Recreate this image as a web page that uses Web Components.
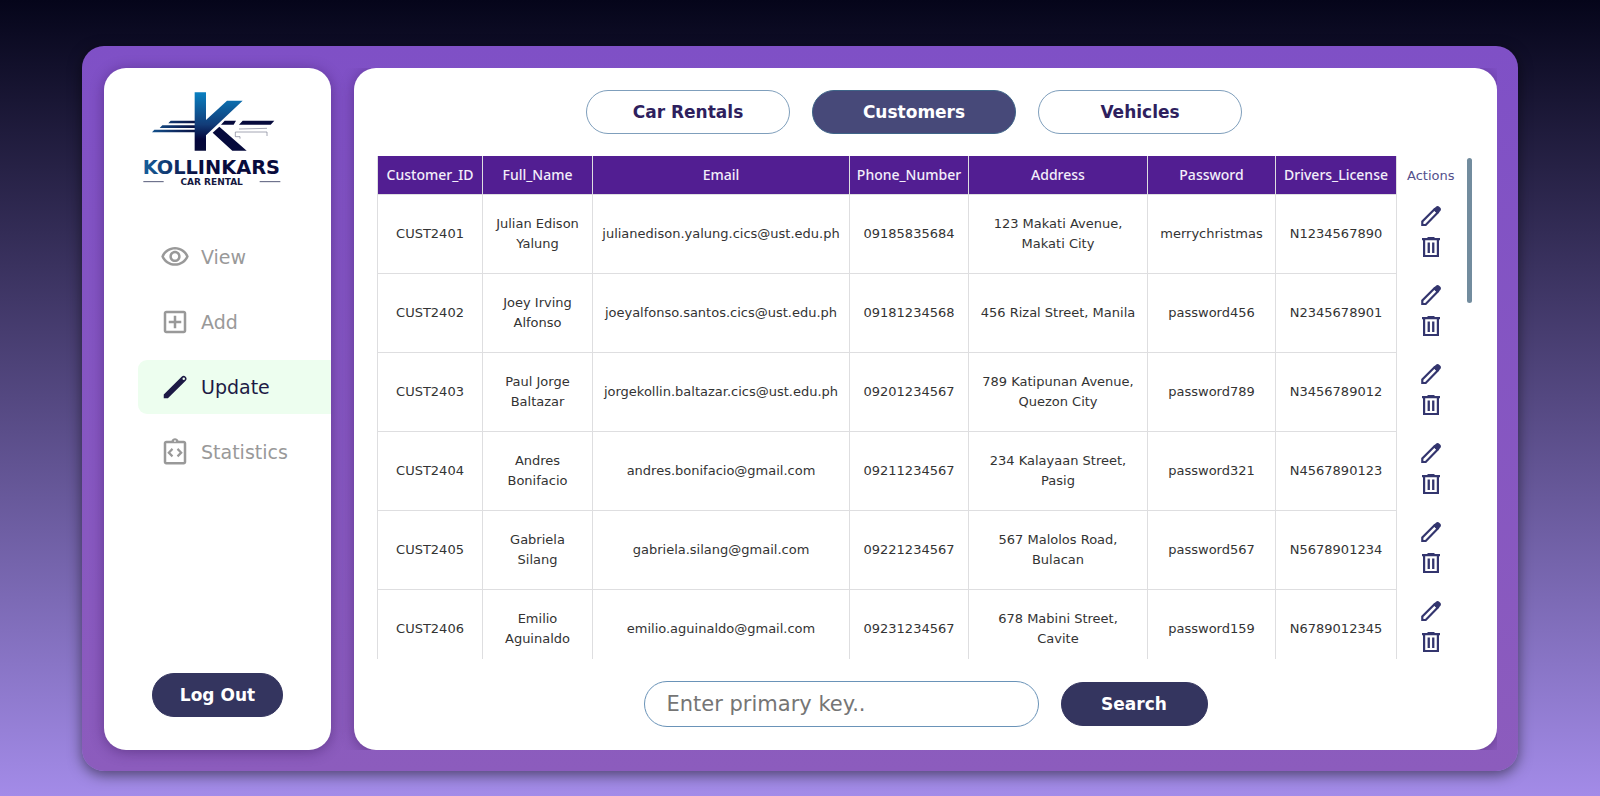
<!DOCTYPE html>
<html lang="en">
<head>
<meta charset="utf-8">
<title>Kollinkars Car Rental</title>
<style>
  html { height: 100%; }
  body { margin: 0; min-height: 100%; font-family: "DejaVu Sans", Verdana, sans-serif; background: #05051a; }
</style>
</head>
<body>
<rental-app></rental-app>

<script>
const ICONS = {
  view: '<path d="M12 6c3.79 0 7.17 2.13 8.82 5.5C19.17 14.87 15.79 17 12 17s-7.17-2.13-8.82-5.5C4.83 8.13 8.21 6 12 6m0-2C7 4 2.73 7.11 1 11.5 2.73 15.89 7 19 12 19s9.27-3.11 11-7.5C21.27 7.11 17 4 12 4zm0 5c1.38 0 2.5 1.12 2.5 2.5S13.38 14 12 14s-2.5-1.12-2.5-2.5S10.62 9 12 9m0-2c-2.48 0-4.5 2.02-4.5 4.5S9.52 16 12 16s4.5-2.02 4.5-4.5S14.48 7 12 7z"/>',
  add: '<path d="M19 3H5c-1.100 0-2 .9-2 2v14c0 1.100.9 2 2 2h14c1.100 0 2-.9 2-2V5c0-1.100-.9-2-2-2zm0 16H5V5h14v14zm-8-2h2v-4h4v-2h-4V7h-2v4H7v2h4z"/>',
  update: '<path fill-rule="evenodd" d="M3 18 17.300 3.700a2.300 2.300 0 0 1 3.200 0 2.300 2.300 0 0 1 0 3.200L6.300 21H3zM19 4.300a1 1 0 1 0 0 2 1 1 0 0 0 0-2z"/>',
  stats: '<path d="M19 3h-4.180C14.400 1.840 13.300 1 12 1s-2.400.84-2.820 2H5c-1.100 0-2 .9-2 2v15c0 1.100.9 2 2 2h14c1.100 0 2-.9 2-2V5c0-1.100-.9-2-2-2zm-7-.5c.41 0 .75.34.75.75S12.410 4 12 4s-.75-.34-.75-.75.34-.75.75-.75zM19 20H5V5h14v15z"/><path d="M10 9.500 7 12.500l3 3M14 9.500l3 3-3 3" fill="none" stroke="currentColor" stroke-width="1.700"/>',
  edit: '<path d="M3.300 21v-3.600L15.500 5.200l3.300 3.300L6.700 21z" fill="none" stroke="currentColor" stroke-width="2.200"/><path d="M14 5.500 17 2.700c.9-.9 2.300-.9 3.200 0l1.100 1.100c.9.9.9 2.300 0 3.200L18.500 10z"/>',
  remove: '<path d="M8.500 2h7v1H21v2.200h-1V22H4V5.200H3V3h5.500zM6.200 5.200v14.700h11.600V5.200zM8.600 7.500h2.300v10.500H8.600zm4.500 0h2.300v10.500h-2.300z" fill-rule="evenodd"/>'
};

const CUSTOMERS = [
  ['CUST2401', 'Julian Edison Yalung', 'julianedison.yalung.cics@ust.edu.ph', '09185835684', '123 Makati Avenue, Makati City', 'merrychristmas', 'N1234567890'],
  ['CUST2402', 'Joey Irving Alfonso', 'joeyalfonso.santos.cics@ust.edu.ph', '09181234568', '456 Rizal Street, Manila', 'password456', 'N2345678901'],
  ['CUST2403', 'Paul Jorge Baltazar', 'jorgekollin.baltazar.cics@ust.edu.ph', '09201234567', '789 Katipunan Avenue, Quezon City', 'password789', 'N3456789012'],
  ['CUST2404', 'Andres Bonifacio', 'andres.bonifacio@gmail.com', '09211234567', '234 Kalayaan Street, Pasig', 'password321', 'N4567890123'],
  ['CUST2405', 'Gabriela Silang', 'gabriela.silang@gmail.com', '09221234567', '567 Malolos Road, Bulacan', 'password567', 'N5678901234'],
  ['CUST2406', 'Emilio Aguinaldo', 'emilio.aguinaldo@gmail.com', '09231234567', '678 Mabini Street, Cavite', 'password159', 'N6789012345']
];

function define(name, html) {
  const tpl = document.createElement('template');
  tpl.innerHTML = html;
  customElements.define(name, class extends HTMLElement {
    constructor() {
      super();
      this.attachShadow({ mode: 'open' }).append(tpl.content.cloneNode(true));
    }
  });
}

/* Single glyph from the icon set; sized by --icon-size */
customElements.define('app-icon', class extends HTMLElement {
  connectedCallback() {
    const root = this.shadowRoot || this.attachShadow({ mode: 'open' });
    root.innerHTML = `<style>
      :host { display: block; width: var(--icon-size, 24px); height: var(--icon-size, 24px); }
      svg { display: block; width: 100%; height: 100%; }
    </style><svg viewBox="0 0 24 24" fill="currentColor" aria-hidden="true">${ICONS[this.getAttribute('name')]}</svg>`;
  }
});

define('brand-logo', `
<style>
  :host { display: block; width: 138px; height: 95px; }
  svg { display: block; overflow: visible; }
</style>
<svg width="138" height="95" viewBox="250 183 414 285" role="img" aria-label="Kollinkars Car Rental">
  <defs>
    <linearGradient id="v" gradientUnits="userSpaceOnUse" x1="0" y1="188" x2="0" y2="362">
      <stop offset="0" stop-color="#0a7fc0"/><stop offset=".55" stop-color="#123c78"/><stop offset=".8" stop-color="#04063c"/><stop offset="1" stop-color="#060a38"/>
    </linearGradient>
    <linearGradient id="h" gradientUnits="userSpaceOnUse" x1="250" y1="0" x2="420" y2="0">
      <stop offset="0" stop-color="#17609c"/><stop offset=".6" stop-color="#0e2a60"/><stop offset="1" stop-color="#080c3c"/>
    </linearGradient>
  </defs>
  <g fill="url(#h)">
    <path d="M333 272H406V280H326zM308 286H406V294H300zM284 299H406V307H277z"/>
  </g>
  <path fill="url(#v)" d="M405 187H439V270L502 212H549L439 316V362H405z"/>
  <path fill="#060a3c" d="M479 290 561 362H518L459 308zM495 272H529L522 284H484zM549 272H644L633 284H538z"/>
  <path d="M538 297 622 295M527 320V306H622V318M527 320H541V326" fill="none" stroke="#777a90" stroke-width="2"/>
  <text x="249" y="433" font-family="DejaVu Sans" font-weight="700" font-size="58" fill="url(#h)">KOLLINKARS</text>
  <path d="M251 455H312M600 455H662" stroke="#555a78" stroke-width="3"/>
  <text x="456" y="465" text-anchor="middle" font-family="DejaVu Sans" font-weight="700" font-size="27" fill="#15193f">CAR RENTAL</text>
</svg>`);

define('nav-link', `
<style>
  :host { display: block; color: #999; --icon-size: 30px; }
  :host([active]) { color: #1d1a45; }
  a {
    display: flex; align-items: center; gap: 11px; height: 54px; padding-left: 22px;
    border-radius: 9px 0 0 9px; color: inherit; text-decoration: none; font-size: 19px;
  }
  :host([active]) a { background: #edfeef; }
</style>
<a href="#"><slot name="icon"></slot><slot></slot></a>`);

define('pill-button', `
<style>
  :host { display: block; }
  button {
    box-sizing: border-box; width: 100%; height: 44px; padding: 0; border-radius: 22px;
    border: 1px solid #34355f; background: #34355f; color: #fff;
    font: 700 17px "DejaVu Sans", Verdana, sans-serif; cursor: pointer;
  }
  :host([outline]) button { background: #fff; color: #2e1f5e; border-color: #7f9fbc; }
  :host([selected]) button { background: #474979; border-color: #3f6488; }
</style>
<button type="button"><slot></slot></button>`);

define('side-bar', `
<style>
  :host {
    display: flex; flex-direction: column; box-sizing: border-box; width: 227px;
    padding: 23px 0 33px; background: #fff; border-radius: 22px;
    box-shadow: 0 2px 14px rgba(40, 10, 70, .4);
  }
  header { padding-left: 39px; }
  nav { display: flex; flex-direction: column; gap: 11px; margin: 44px 0 auto; padding-left: 34px; }
  pill-button { width: 131px; margin: 0 auto; }
</style>
<header><brand-logo></brand-logo></header>
<nav>
  <nav-link><app-icon slot="icon" name="view"></app-icon>View</nav-link>
  <nav-link><app-icon slot="icon" name="add"></app-icon>Add</nav-link>
  <nav-link active><app-icon slot="icon" name="update"></app-icon>Update</nav-link>
  <nav-link><app-icon slot="icon" name="stats"></app-icon>Statistics</nav-link>
</nav>
<pill-button>Log Out</pill-button>`);

define('tab-bar', `
<style>
  :host { display: flex; justify-content: center; gap: 22px; padding-right: 23px; }
  pill-button { width: 204px; }
</style>
<pill-button outline>Car Rentals</pill-button>
<pill-button selected>Customers</pill-button>
<pill-button outline>Vehicles</pill-button>`);

customElements.define('customer-table', class extends HTMLElement {
  constructor() {
    super();
    const rows = CUSTOMERS.map(r => `<tr>${r.map(c => `<td>${c}</td>`).join('')}
      <td class="actions"><button type="button" aria-label="Edit ${r[0]}"><app-icon name="edit"></app-icon></button><button type="button" aria-label="Delete ${r[0]}"><app-icon name="remove"></app-icon></button></td></tr>`).join('');
    this.attachShadow({ mode: 'open' }).innerHTML = `
<style>
  :host { display: flex; gap: 3px; min-height: 0; padding-right: 2px; }
  .scroller { flex: 1; min-width: 0; overflow: auto; scrollbar-width: none; }
  .track { width: 5px; padding-top: 2px; }
  .thumb { height: 29%; border-radius: 3px; background: #728c9e; }
  table { width: 100%; table-layout: fixed; border-collapse: collapse; font-size: 13px; line-height: 20px; color: #333; text-align: center; }
  th, td { box-sizing: border-box; padding: 0 8px; border: 1px solid #dedee0; }
  .id { width: 105px; } .name { width: 110px; } .email { width: 257px; } .phone { width: 119px; }
  .address { width: 179px; } .password { width: 128px; } .license { width: 121px; } .act { width: 68px; }
  th { height: 38px; padding: 0; border-top: 0; background: #521e92; color: #f3eefa; font-family: "Noto Sans", sans-serif; font-size: 14px; font-weight: 500; }
  td { height: 79px; }
  th.act { border-width: 0 0 0 1px; border-left-color: #fff; background: none; color: #54508c; font: 13px "DejaVu Sans", Verdana, sans-serif; }
  td.actions { padding: 0 0 4px; border-width: 0 0 0 1px; border-bottom: 0; }
  .actions button { display: grid; place-items: center; width: 31px; height: 31px; margin: 0 auto; padding: 0; border: 0; background: none; color: #33356e; cursor: pointer; --icon-size: 24px; }
</style>
<div class="scroller"><table>
  <thead><tr><th class="id">Customer_ID</th><th class="name">Full_Name</th><th class="email">Email</th><th class="phone">Phone_Number</th><th class="address">Address</th><th class="password">Password</th><th class="license">Drivers_License</th><th class="act">Actions</th></tr></thead>
  <tbody>${rows}</tbody>
</table></div>
<div class="track"><div class="thumb"></div></div>`;
  }
});

define('search-bar', `
<style>
  :host { display: flex; justify-content: center; align-items: center; gap: 22px; }
  input {
    box-sizing: border-box; width: 395px; height: 46px; padding: 0 22px; border: 1px solid #6a93b8;
    border-radius: 23px; background: #fff; color: #333; font: 21px "DejaVu Sans", Verdana, sans-serif; outline: none;
  }
  input::placeholder { color: #757575; opacity: 1; }
  pill-button { width: 147px; }
</style>
<input type="text" aria-label="Primary key" placeholder="Enter primary key..">
<pill-button>Search</pill-button>`);

define('rental-app', `
<style>
  :host {
    display: flex; box-sizing: border-box; height: 100vh; padding: 46px 82px 25px;
    background: linear-gradient(#05051a, #a38be8);
  }
  .card {
    display: flex; flex: 1; gap: 23px; min-width: 0; padding: 22px 21px 21px 22px; border-radius: 22px;
    background: linear-gradient(#7f50c6, #8c5cbd); box-shadow: 0 4px 14px rgba(0, 0, 0, .5);
  }
  side-bar { flex: none; }
  main {
    display: flex; flex: 1; flex-direction: column; gap: 22px; min-width: 0; box-sizing: border-box;
    padding: 22px 23px 23px; border-radius: 22px; background: #fff;
    box-shadow: 0 2px 14px rgba(40, 10, 70, .4); clip-path: inset(0 0 0 -23px);
  }
  customer-table { flex: 1; }
</style>
<div class="card">
  <side-bar></side-bar>
  <main>
    <tab-bar></tab-bar>
    <customer-table></customer-table>
    <search-bar></search-bar>
  </main>
</div>`);
</script>
</body>
</html>
